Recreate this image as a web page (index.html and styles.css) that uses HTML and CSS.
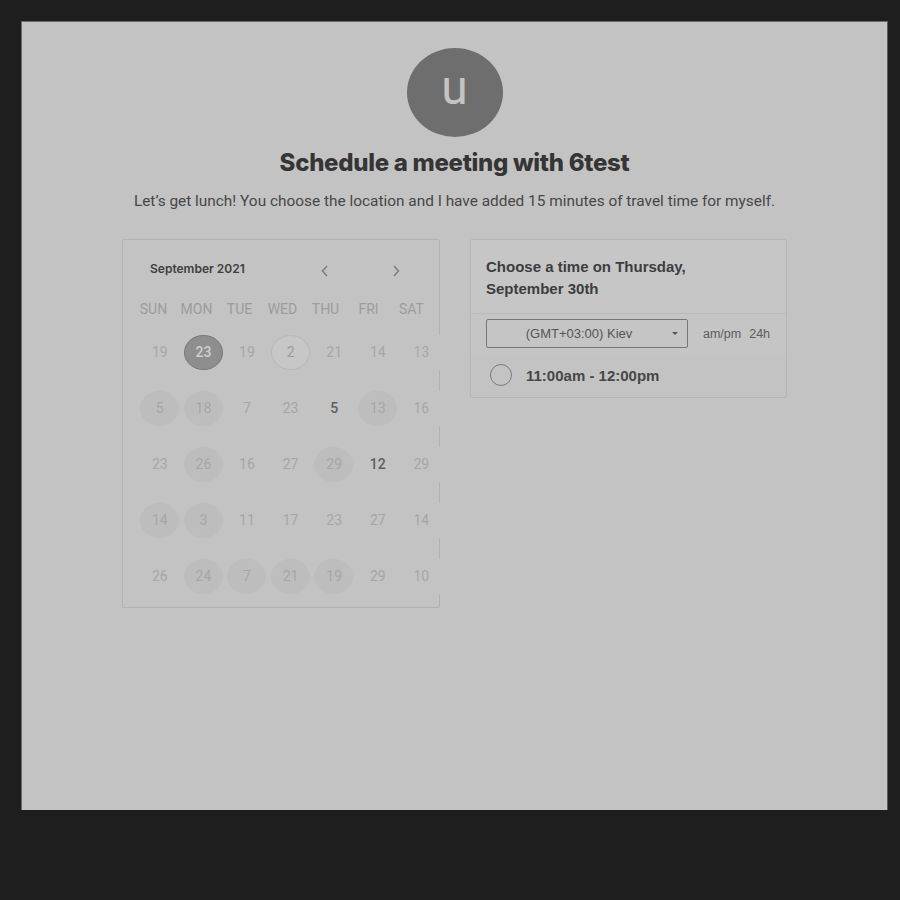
FILE: index.html
```html
<!DOCTYPE html>
<html>
<head>
<meta charset="utf-8">
<link rel="stylesheet" href="styles.css">
</head>
<body>
<div class="panel">
  <div class="avatar">u</div>
  <h1 class="title">Schedule a meeting with 6test</h1>
  <p class="desc">Let’s get lunch! You choose the location and I have added 15 minutes of travel time for myself.</p>
  <div class="cards">
    <div class="calendar">
      <div class="cal-head">
        <span class="month">September 2021</span>
        <span class="arrows">
          <svg class="arrow" width="10" height="14" viewBox="0 0 10 14"><path d="M7 2 L2.5 7 L7 12" fill="none" stroke="#7a7a7a" stroke-width="1.4"/></svg>
          <svg class="arrow" width="10" height="14" viewBox="0 0 10 14"><path d="M3 2 L7.5 7 L3 12" fill="none" stroke="#7a7a7a" stroke-width="1.4"/></svg>
        </span>
      </div>
      <div class="weekdays">
        <span>SUN</span><span>MON</span><span>TUE</span><span>WED</span><span>THU</span><span>FRI</span><span>SAT</span>
      </div>
      <div class="days">
        <div class="row">
          <span class="d">19</span><span class="d sel">23</span><span class="d">19</span><span class="d today">2</span><span class="d">21</span><span class="d">14</span><span class="d">13</span>
        </div>
        <div class="row">
          <span class="d av">5</span><span class="d av">18</span><span class="d">7</span><span class="d">23</span><span class="d strong">5</span><span class="d av">13</span><span class="d">16</span>
        </div>
        <div class="row">
          <span class="d">23</span><span class="d av">26</span><span class="d">16</span><span class="d">27</span><span class="d av">29</span><span class="d strong">12</span><span class="d">29</span>
        </div>
        <div class="row">
          <span class="d av">14</span><span class="d av">3</span><span class="d">11</span><span class="d">17</span><span class="d">23</span><span class="d">27</span><span class="d">14</span>
        </div>
        <div class="row">
          <span class="d">26</span><span class="d av">24</span><span class="d av">7</span><span class="d av">21</span><span class="d av">19</span><span class="d">29</span><span class="d">10</span>
        </div>
      </div>
    </div>
    <div class="times">
      <div class="times-head">Choose a time on Thursday,<br>September 30th</div>
      <div class="tz-row">
        <div class="select">
          <span class="select-text">(GMT+03:00) Kiev</span>
          <span class="caret"></span>
        </div>
        <div class="fmt"><span>am/pm</span><span>24h</span></div>
      </div>
      <div class="slot">
        <span class="radio"></span>
        <span class="slot-text">11:00am - 12:00pm</span>
      </div>
    </div>
  </div>
</div>
</body>
</html>
```

FILE: styles.css
```css
html, body {
  margin: 0;
  padding: 0;
  background: #1e1e1e;
  width: 900px;
  height: 900px;
}

.panel {
  margin: 21px 0 0 21px;
  width: 867px;
  height: 789px;
  background: #c3c3c3;
  border-top: 1px solid #6a6a6a;
  border-left: 1px solid #6a6a6a;
  border-right: 1px solid #5a5a5a;
  box-sizing: border-box;
  display: flex;
  flex-direction: column;
  align-items: center;
  font-family: Roboto, "Liberation Sans", sans-serif;
}

.avatar {
  margin-top: 26px;
  width: 96px;
  height: 89px;
  border-radius: 50%;
  background: #6e6e6e;
  color: #c4c4c4;
  font-family: Roboto, sans-serif;
  font-size: 48px;
  line-height: 80px;
  text-align: center;
}

.title {
  margin: 12px 0 0;
  font-family: Inter, "Liberation Sans", sans-serif;
  font-weight: 800;
  font-size: 24px;
  letter-spacing: -0.3px;
  line-height: 28px;
  color: #353535;
}

.desc {
  margin: 14px 0 0;
  font-size: 15.4px;
  line-height: 20px;
  color: #474747;
}

.cards {
  margin-top: 28px;
  display: flex;
  gap: 30px;
  align-items: flex-start;
}

.calendar {
  width: 318px;
  height: 369px;
  box-sizing: border-box;
  border: 1px solid #b2b2b2;
  border-radius: 2px;
  font-family: Roboto, sans-serif;
}

.cal-head {
  display: flex;
  align-items: center;
  height: 30px;
  margin-top: 13px;
  padding-left: 27px;
}

.month {
  font-family: Inter, "Liberation Sans", sans-serif;
  font-weight: 600;
  font-size: 12px;
  color: #3e3e3e;
  width: 170px;
}

.arrows {
  display: flex;
  gap: 61px;
  margin-top: 5px;
}

.weekdays {
  display: grid;
  grid-template-columns: repeat(7, 43px);
  padding-left: 9px;
  margin-top: 16px;
  height: 20px;
  line-height: 20px;
  font-size: 14px;
  color: #9c9c9c;
  text-align: center;
}

.days {
  margin-top: 5px;
  padding-left: 15px;
}

.row {
  display: grid;
  grid-template-columns: repeat(7, 43.6px);
  height: 56px;
  align-items: center;
  width: 305px;
}

.d {
  display: flex;
  align-items: center;
  justify-content: center;
  height: 35px;
  background: #c3c3c3;
  font-size: 14px;
  color: #a6a6a6;
  position: relative;
  isolation: isolate;
}

.d.av::before,
.d.sel::before,
.d.today::before {
  content: "";
  position: absolute;
  left: 2px;
  top: 0;
  width: 39px;
  height: 35px;
  border-radius: 50%;
  background: #bdbdbd;
  box-sizing: border-box;
  z-index: -1;
}

.d.sel::before {
  background: #8e8e8e;
  border: 1px solid #7a7a7a;
}

.d.today::before {
  background: #c7c7c7;
  border: 1px solid #b9b9b9;
}

.d.sel {
  color: #cfcfcf;
  font-weight: 500;
}

.d.today { color: #9c9c9c; }

.d.strong {
  color: #5f5f5f;
  font-weight: 500;
}

.times {
  width: 317px;
  box-sizing: border-box;
  border: 1px solid #b6b6b6;
  border-radius: 2px;
  font-family: "Liberation Sans", Arial, sans-serif;
}

.times-head {
  padding: 16px 15px 13px;
  background: #c6c6c6;
  font-weight: 700;
  font-size: 15px;
  line-height: 22px;
  color: #3d3d3d;
  border-bottom: 1px solid #bababa;
}

.tz-row {
  display: flex;
  align-items: center;
  padding: 5px 0 5px 15px;
  background: #c5c5c5;
}

.select {
  width: 202px;
  height: 29px;
  box-sizing: border-box;
  border: 1px solid #777;
  border-radius: 2px;
  display: flex;
  align-items: center;
  position: relative;
}

.select-text {
  width: 184px;
  text-align: center;
  font-size: 13px;
  color: #555;
}

.caret {
  width: 0;
  height: 0;
  border-left: 3px solid transparent;
  border-right: 3px solid transparent;
  border-top: 3px solid #555;
  margin-left: 1px;
}

.fmt {
  display: flex;
  gap: 8px;
  margin-left: 15px;
  font-size: 12.5px;
  color: #5c5c5c;
}

.slot {
  display: flex;
  align-items: center;
  height: 44px;
  padding-left: 19px;
}

.radio {
  width: 22px;
  height: 22px;
  box-sizing: border-box;
  border: 1.5px solid #7c7c7c;
  border-radius: 50%;
}

.slot-text {
  margin-left: 14px;
  font-weight: 700;
  font-size: 15px;
  color: #474747;
}
```
